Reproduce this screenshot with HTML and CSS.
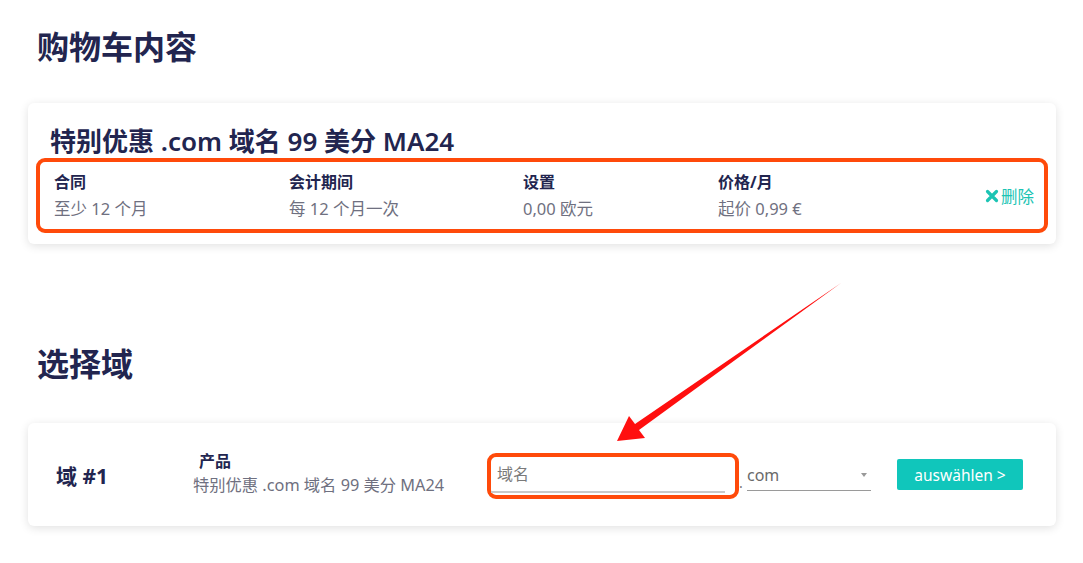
FILE: index.html
```html
<!DOCTYPE html>
<html lang="zh">
<head>
  <meta charset="UTF-8">
  <meta name="viewport" content="width=device-width, initial-scale=1.0">
  <title>购物车内容</title>
  <link rel="stylesheet" href="styles.css">
</head>
<body>

  <div class="page">
      <h1 class="section-title">购物车内容</h1>

      <div class="card cart-card">
          <h2 class="product-title">特别优惠 .com 域名 99 美分 MA24</h2>
          <div class="details mark">
              <div class="detail">
                  <div class="detail-label">合同</div>
                  <div class="detail-value">至少 12 个月</div>
              </div>
              <div class="detail">
                  <div class="detail-label">会计期间</div>
                  <div class="detail-value">每 12 个月一次</div>
              </div>
              <div class="detail">
                  <div class="detail-label">设置</div>
                  <div class="detail-value">0,00 欧元</div>
              </div>
              <div class="detail">
                  <div class="detail-label">价格/月</div>
                  <div class="detail-value">起价 0,99 €</div>
              </div>
              <a class="remove" href="#">
                  <svg width="14" height="14" viewBox="0 0 14 14"><path d="M2.5 2.5 L11.5 11.5 M11.5 2.5 L2.5 11.5" stroke="#1cc4b4" stroke-width="3.2" stroke-linecap="round"/></svg>
                  删除
              </a>
          </div>
      </div>

      <h1 class="section-title second">选择域</h1>

      <div class="card domain-card">
          <div class="domain-no">域 #1</div>
          <div class="product">
              <div class="detail-label">产品</div>
              <div class="detail-value">特别优惠 .com 域名 99 美分 MA24</div>
          </div>
          <div class="input-wrap mark">
              <input type="text" class="domain-input" placeholder="域名">
          </div>
          <span class="dot">.</span>
          <div class="tld-select">
              <span>com</span>
              <span class="caret"></span>
          </div>
          <button class="choose-btn">auswählen &gt;</button>
      </div>
  </div>

  <svg class="arrow" width="1083" height="563" viewBox="0 0 1083 563">
      <polygon points="841,283 639,430 645,438 617,441 629,416 635,424" fill="#ff0f0f"/>
  </svg>

</body>
</html>
```

FILE: styles.css
```css
body {
  font-family: "Noto Sans", "Noto Sans CJK SC", sans-serif;
  background-color: #ffffff;
  color: #22254f;
  margin: 0;
  padding: 0;
  position: relative;
  width: 1083px;
  height: 563px;
  overflow: hidden;
}

.page {
  padding: 26px 27px 0 28px;
}

.section-title {
  font-size: 32px;
  line-height: 42px;
  font-weight: 700;
  margin: 0 0 35px 9px;
}

.section-title.second {
  margin-top: 99px;
  margin-bottom: 38px;
}

.card {
  background: #ffffff;
  border-radius: 6px;
  box-shadow: 0 2px 10px rgba(0, 0, 0, 0.12);
}

.cart-card {
  padding: 21px 8px 11px 8px;
}

.product-title {
  font-size: 26px;
  line-height: 34px;
  font-weight: 600;
  margin: 0 0 0 14px;
}

.mark {
  border: 4px solid #ff4a0a;
  border-radius: 9px;
}

.details {
  display: grid;
  grid-template-columns: 235px 234px 195px 1fr auto;
  align-items: center;
  padding: 9px 10px 9px 14px;
}

.detail-label {
  font-size: 16px;
  line-height: 22px;
  font-weight: 700;
}

.detail-value {
  font-size: 16.5px;
  line-height: 23px;
  color: #6f7080;
  margin-top: 4px;
}

.remove {
  display: flex;
  align-items: center;
  gap: 2px;
  color: #1cc4b4;
  font-size: 16.5px;
  text-decoration: none;
}

.domain-card {
  display: flex;
  align-items: center;
  height: 103px;
  padding: 0 0 0 28px;
}

.domain-no {
  width: 137px;
  font-size: 21px;
  font-weight: 700;
}

.product {
  width: 294px;
  margin-top: -2px;
}

.product .detail-label {
  padding-left: 6px;
}

.product .detail-value {
  margin-top: 2px;
  font-size: 16.3px;
}

.input-wrap {
  width: 244px;
  height: 38px;
  padding: 0;
  display: flex;
  margin-top: 2px;
}

.domain-input {
  width: 234px;
  height: 36px;
  border: none;
  border-bottom: 2px solid #c9c9c9;
  padding: 0 0 0 6px;
  margin: 0;
  font-family: inherit;
  font-size: 16px;
  color: #333;
  background: transparent;
  outline: none;
  box-sizing: border-box;
}

.domain-input::placeholder {
  color: #7a7a7a;
}

.dot {
  width: 8px;
  color: #777;
  font-size: 14px;
  margin-top: 16px;
  box-sizing: border-box;
}

.tld-select {
  width: 124px;
  height: 30px;
  border-bottom: 1px solid #9a9a9a;
  display: flex;
  justify-content: space-between;
  align-items: center;
  font-size: 16px;
  color: #6a6a6a;
  margin-top: 1px;
}

.caret {
  width: 0;
  height: 0;
  border-left: 3px solid transparent;
  border-right: 3px solid transparent;
  border-top: 4px solid #999;
  margin-right: 4px;
}

.choose-btn {
  margin-left: 26px;
  width: 126px;
  height: 31px;
  background: #10c6bb;
  color: #ffffff;
  border: none;
  border-radius: 2px;
  font-family: inherit;
  font-size: 15.5px;
  cursor: pointer;
}

.arrow {
  position: absolute;
  top: 0;
  left: 0;
  pointer-events: none;
}
```
